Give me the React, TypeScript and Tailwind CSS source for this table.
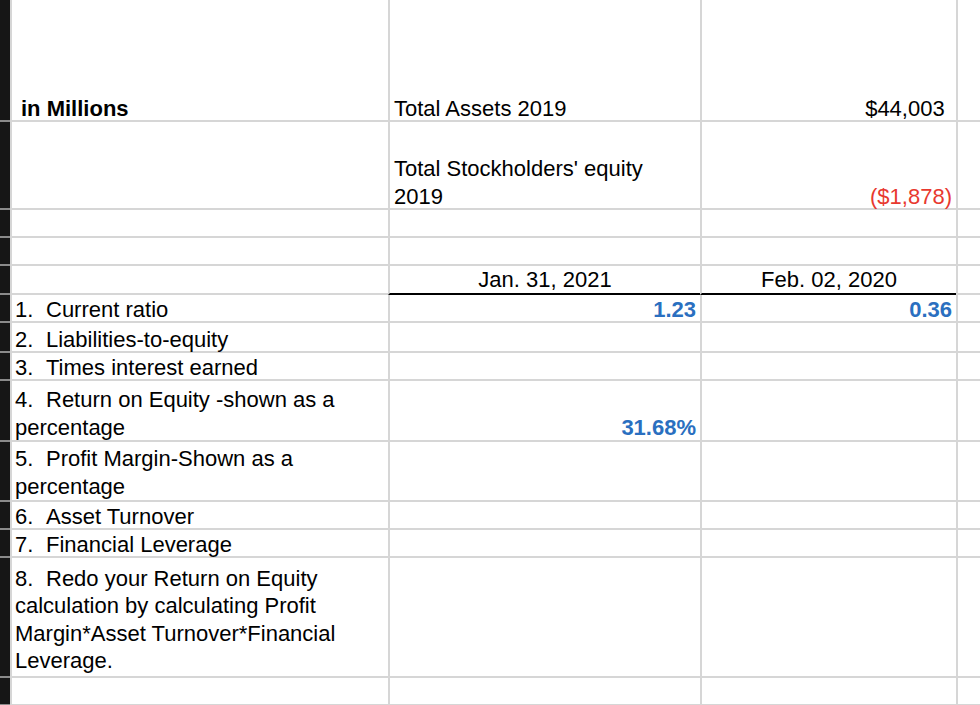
import React from "react";

const G = "border-l-[#d6d6d6]";

type P = { children?: React.ReactNode; className?: string; dark?: boolean };

function Bar() {
  return <div className="w-[10px] shrink-0 bg-[#161616] border-b-2 border-b-[#8a8a8a]" />;
}

function A({ children, className = "mb-[-3px]" }: P) {
  return (
    <div className={`w-[378px] shrink-0 border-l-2 border-b-2 ${G} border-b-[#d6d6d6] flex flex-col justify-end pl-[3px]`}>
      <div className={className}>{children}</div>
    </div>
  );
}

function B({ children, className = "mb-[-3px]", dark = false }: P) {
  return (
    <div
      className={`w-[312px] shrink-0 border-l-2 border-b-2 ${G} ${dark ? "border-b-black" : "border-b-[#d6d6d6]"} flex flex-col justify-end px-[4px]`}
    >
      <div className={className}>{children}</div>
    </div>
  );
}

function C({ children, className = "mb-[-3px]", dark = false }: P) {
  return (
    <div
      className={`w-[256px] shrink-0 border-l-2 border-b-2 ${G} ${dark ? "border-b-black" : "border-b-[#d6d6d6]"} flex flex-col justify-end px-[4px]`}
    >
      <div className={className}>{children}</div>
    </div>
  );
}

function D() {
  return <div className={`flex-1 border-l-2 border-b-2 ${G} border-b-[#d6d6d6]`} />;
}

function Num({ n }: { n: string }) {
  return <span className="inline-block w-[31px]">{n}</span>;
}

const blue = "text-right font-bold text-[#2a6fc0]";

export default function App() {
  return (
    <div
      className="w-[980px] h-[705px] overflow-hidden bg-white text-black text-[22px] leading-[28px]"
      style={{ fontFamily: '"Liberation Sans", Arial, Helvetica, sans-serif' }}
    >
      <div className="flex h-[122px]">
        <Bar />
        <A>
          <div className="pl-[6px] font-bold">in Millions</div>
        </A>
        <B>
          <div>Total Assets 2019</div>
        </B>
        <C>
          <div className="text-right">
            $44,003<span className="invisible">)</span>
          </div>
        </C>
        <D />
      </div>

      <div className="flex h-[88px]">
        <Bar />
        <A />
        <B>
          <div>Total Stockholders' equity</div>
          <div>2019</div>
        </B>
        <C>
          <div className="text-right text-[#e8392f]">($1,878)</div>
        </C>
        <D />
      </div>

      <div className="flex h-[28px]">
        <Bar />
        <A />
        <B />
        <C />
        <D />
      </div>

      <div className="flex h-[28px]">
        <Bar />
        <A />
        <B />
        <C />
        <D />
      </div>

      <div className="flex h-[29px]">
        <Bar />
        <A />
        <B dark className="mb-[-1px]">
          <div className="text-center">Jan. 31, 2021</div>
        </B>
        <C dark className="mb-[-1px]">
          <div className="text-center">Feb. 02, 2020</div>
        </C>
        <D />
      </div>

      <div className="flex h-[28px]">
        <Bar />
        <A>
          <div className="whitespace-nowrap">
            <Num n="1." />Current ratio
          </div>
        </A>
        <B>
          <div className={blue}>1.23</div>
        </B>
        <C>
          <div className={blue}>0.36</div>
        </C>
        <D />
      </div>

      <div className="flex h-[30px]">
        <Bar />
        <A>
          <div className="whitespace-nowrap">
            <Num n="2." />Liabilities-to-equity
          </div>
        </A>
        <B />
        <C />
        <D />
      </div>

      <div className="flex h-[28px]">
        <Bar />
        <A>
          <div className="whitespace-nowrap">
            <Num n="3." />Times interest earned
          </div>
        </A>
        <B />
        <C />
        <D />
      </div>

      <div className="flex h-[61px]">
        <Bar />
        <A className="mb-[-2px]">
          <div className="whitespace-nowrap">
            <Num n="4." />Return on Equity -shown as a
          </div>
          <div className="whitespace-nowrap">percentage</div>
        </A>
        <B className="mb-[-2px]">
          <div className={blue}>31.68%</div>
        </B>
        <C />
        <D />
      </div>

      <div className="flex h-[60px]">
        <Bar />
        <A className="mb-[-1px]">
          <div className="whitespace-nowrap">
            <Num n="5." />Profit Margin-Shown as a
          </div>
          <div className="whitespace-nowrap">percentage</div>
        </A>
        <B />
        <C />
        <D />
      </div>

      <div className="flex h-[28px]">
        <Bar />
        <A>
          <div className="whitespace-nowrap">
            <Num n="6." />Asset Turnover
          </div>
        </A>
        <B />
        <C />
        <D />
      </div>

      <div className="flex h-[28px]">
        <Bar />
        <A>
          <div className="whitespace-nowrap">
            <Num n="7." />Financial Leverage
          </div>
        </A>
        <B />
        <C />
        <D />
      </div>

      <div className="flex h-[120px]">
        <Bar />
        <A className="mb-[1px] leading-[27.6px]">
          <div className="whitespace-nowrap">
            <Num n="8." />Redo your Return on Equity
          </div>
          <div className="whitespace-nowrap">calculation by calculating Profit</div>
          <div className="whitespace-nowrap">Margin*Asset Turnover*Financial</div>
          <div className="whitespace-nowrap">Leverage.</div>
        </A>
        <B />
        <C />
        <D />
      </div>

      <div className="flex h-[28px]">
        <Bar />
        <A />
        <B />
        <C />
        <D />
      </div>
    </div>
  );
}
